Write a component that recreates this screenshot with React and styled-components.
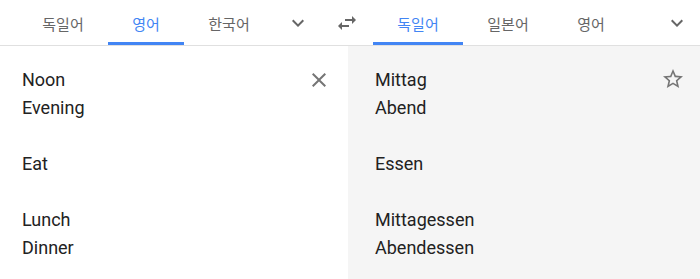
import React from "react";
import styled, { createGlobalStyle } from "styled-components";

const Global = createGlobalStyle`
  html, body { margin: 0; padding: 0; background: #fff; }
  body { font-family: Roboto, "Noto Sans CJK KR", sans-serif; }
  * { box-sizing: border-box; }
`;

const Page = styled.div`
  width: 700px;
  height: 279px;
  display: flex;
  flex-direction: column;
  overflow: hidden;
`;

const Header = styled.div`
  height: 46px;
  display: flex;
  align-items: stretch;
  border-bottom: 1px solid #e0e0e0;
  background: #fff;
`;

const LangGroup = styled.div`
  display: flex;
  align-items: stretch;
  width: ${(p) => p.$width || "auto"};
  flex: ${(p) => (p.$grow ? 1 : "none")};
  padding-left: ${(p) => p.$pad}px;
`;

const Tab = styled.div`
  position: relative;
  width: ${(p) => p.$w}px;
  padding-top: 2px;
  display: flex;
  align-items: center;
  justify-content: center;
  font-family: "Noto Sans CJK KR", Roboto, sans-serif;
  font-size: 15px;
  color: ${(p) => (p.$active ? "#4285f4" : "#666")};
  white-space: nowrap;
  &::after {
    content: "";
    position: absolute;
    left: 0;
    right: 0;
    bottom: 0;
    height: 3px;
    background: ${(p) => (p.$active ? "#4285f4" : "transparent")};
  }
`;

const IconButton = styled.div`
  width: ${(p) => p.$w || 48}px;
  display: flex;
  align-items: center;
  justify-content: center;
  margin-left: ${(p) => (p.$auto ? "auto" : "0")};
  margin-right: ${(p) => p.$mr || 0}px;
  color: #666;
  svg { display: block; }
`;

const Body = styled.div`
  flex: 1;
  display: grid;
  grid-template-columns: 348px 1fr;
`;

const Panel = styled.div`
  display: flex;
  align-items: flex-start;
  padding: 20px ${(p) => p.$pr}px 0 ${(p) => p.$pl}px;
  background: ${(p) => p.$bg};
`;

const Text = styled.div`
  flex: 1;
  font-family: Roboto, sans-serif;
  font-size: 18px;
  line-height: 28px;
  color: #222;
`;

const Line = styled.div`
  height: 28px;
  white-space: nowrap;
`;

const PanelIcon = styled.div`
  width: 24px;
  height: 24px;
  margin-top: ${(p) => p.$mt}px;
  color: #757575;
  svg { display: block; }
`;

const Icon = ({ d, size = 24 }) => (
  <svg width={size} height={size} viewBox="0 0 24 24" fill="currentColor">
    <path d={d} />
  </svg>
);

const CHEVRON = "M16.59 8.59L12 13.17 7.41 8.59 6 10l6 6 6-6z";
const SWAP = "M6.99 11L3 15l3.99 4v-3H14v-2H6.99v-3zM21 9l-4-4v3H10v2h7v3l4-4z";
const CLOSE =
  "M19 6.41L17.59 5 12 10.59 6.41 5 5 6.41 10.59 12 5 17.59 6.41 19 12 13.41 17.59 19 19 17.59 13.41 12z";
const STAR =
  "M22 9.24l-7.19-.62L12 2 9.19 8.63 2 9.24l5.46 4.73L5.82 21 12 17.27 18.18 21l-1.63-7.03L22 9.24zM12 15.4l-3.76 2.27 1-4.28-3.32-2.88 4.38-.38L12 6.1l1.71 4.04 4.38.38-3.32 2.88 1 4.28L12 15.4z";

const sourceLines = ["Noon", "Evening", "", "Eat", "", "Lunch", "Dinner"];
const targetLines = ["Mittag", "Abend", "", "Essen", "", "Mittagessen", "Abendessen"];

export default function App() {
  return (
    <>
      <Global />
      <Page>
        <Header>
          <LangGroup $width="323px" $pad={18}>
            <Tab $w={90}>독일어</Tab>
            <Tab $w={76} $active>영어</Tab>
            <Tab $w={90}>한국어</Tab>
            <IconButton>
              <Icon d={CHEVRON} />
            </IconButton>
          </LangGroup>
          <IconButton $w={48}>
            <Icon d={SWAP} />
          </IconButton>
          <LangGroup $grow $pad={2}>
            <Tab $w={90} $active>독일어</Tab>
            <Tab $w={90}>일본어</Tab>
            <Tab $w={76}>영어</Tab>
            <IconButton $w={40} $auto $mr={3}>
              <Icon d={CHEVRON} />
            </IconButton>
          </LangGroup>
        </Header>
        <Body>
          <Panel $bg="#fff" $pl={22} $pr={17}>
            <Text>
              {sourceLines.map((l, i) => (
                <Line key={i}>{l}</Line>
              ))}
            </Text>
            <PanelIcon $mt={2}>
              <Icon d={CLOSE} />
            </PanelIcon>
          </Panel>
          <Panel $bg="#f5f5f5" $pl={27} $pr={15}>
            <Text>
              {targetLines.map((l, i) => (
                <Line key={i}>{l}</Line>
              ))}
            </Text>
            <PanelIcon $mt={1}>
              <Icon d={STAR} />
            </PanelIcon>
          </Panel>
        </Body>
      </Page>
    </>
  );
}
